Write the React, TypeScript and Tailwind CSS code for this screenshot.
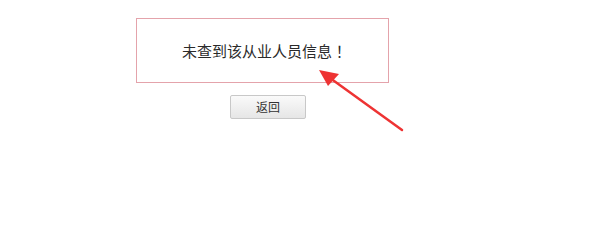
export default function App() {
  return (
    <div className="relative w-[600px] h-[241px] bg-white" style={{ fontFamily: '"Microsoft YaHei", "Noto Sans CJK SC", sans-serif' }}>
      <div className="flex flex-col items-start pt-[18px] pl-[136px]">
        <div className="w-[253px] h-[65px] border border-[#e4a3ab] flex items-center justify-center">
          <p className="text-[15px] text-[#2a2a2a] pt-[2px] pl-[4px]">
            未查到该从业人员信息<span style={{ fontFamily: '"Noto Sans CJK TC", sans-serif' }}>！</span>
          </p>
        </div>
        <button className="mt-[12px] ml-[94px] w-[76px] h-[24px] border border-[#c8c8c8] rounded-[2px] bg-gradient-to-b from-[#fafafa] to-[#e6e6e6] text-[12px] text-[#333] flex items-center justify-center">
          返回
        </button>
      </div>
      {/* red annotation arrow */}
      <svg className="absolute left-0 top-0" width="600" height="241" viewBox="0 0 600 241">
        <line x1="402" y1="130" x2="330" y2="78" stroke="#ee3333" strokeWidth="2.5" strokeLinecap="round" />
        <polygon points="319,70 339,74 328,86" fill="#ee3333" />
      </svg>
    </div>
  )
}
